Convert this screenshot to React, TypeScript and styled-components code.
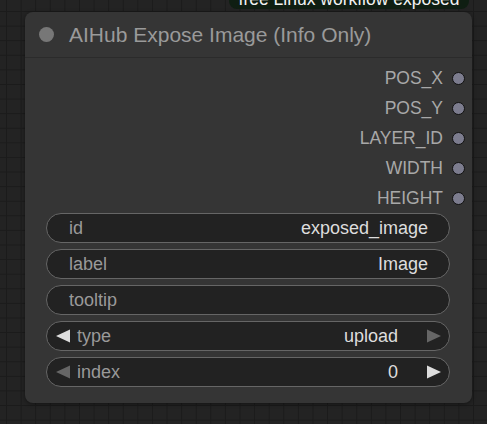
import React from "react";
import styled, { createGlobalStyle } from "styled-components";

const Global = createGlobalStyle`
  html, body { margin: 0; padding: 0; background: #222; }
  * { box-sizing: border-box; }
`;

const Canvas = styled.div`
  position: relative;
  width: 487px;
  height: 424px;
  overflow: hidden;
  padding: 12px 0 0 25px;
  background-color: #232323;
  background-image:
    linear-gradient(to right, #1b1b1b 1px, transparent 1px),
    linear-gradient(to bottom, #1b1b1b 1px, transparent 1px);
  background-size: 14.6px 14.6px;
  background-position: 6px 11px;
  font-family: "Liberation Sans", Arial, sans-serif;
`;

const Badge = styled.div`
  position: absolute;
  left: 229px;
  top: -12px;
  width: 240px;
  height: 21px;
  padding-top: 1px;
  background: #0f1e12;
  border-radius: 0 0 8px 8px;
  color: #f2f2f2;
  font-size: 17.5px;
  line-height: 21px;
  text-align: center;
  white-space: nowrap;
  overflow: hidden;
`;

const Node = styled.div`
  width: 447px;
  height: 391px;
  background: #353535;
  border-radius: 8px;
  box-shadow: 0 1px 4px rgba(0, 0, 0, 0.45);
  display: flex;
  flex-direction: column;
`;

const TitleBar = styled.div`
  height: 46px;
  display: flex;
  align-items: center;
  gap: 15px;
  padding-left: 14px;
  border-bottom: 1px solid #2b2b2b;
`;

const TitleDot = styled.span`
  width: 15px;
  height: 15px;
  border-radius: 50%;
  background: #777;
`;

const TitleText = styled.span`
  font-size: 21px;
  color: #9a9a9a;
`;

const Outputs = styled.div`
  display: flex;
  flex-direction: column;
  padding: 5px 7px 0 0;
`;

const OutputRow = styled.div`
  height: 30px;
  display: flex;
  justify-content: flex-end;
  align-items: center;
  gap: 9px;
`;

const OutputLabel = styled.span`
  font-size: 17.5px;
  color: #a8a8a8;
`;

const Slot = styled.span`
  width: 13px;
  height: 13px;
  border-radius: 50%;
  background: #7c7c8e;
  border: 1.5px solid #111;
`;

const Widgets = styled.div`
  display: flex;
  flex-direction: column;
  gap: 6px;
  padding: 0 22px 0 21px;
`;

const Widget = styled.div<{ $combo?: boolean }>`
  height: 30px;
  display: flex;
  align-items: center;
  background: #222;
  border: 1px solid #666;
  border-radius: 15px;
  padding: ${(p) => (p.$combo ? "0 8px 0 9px" : "0 21px 0 22px")};
  font-size: 18px;
`;

const WLabel = styled.span<{ $combo?: boolean }>`
  flex: 1;
  color: #999;
  margin-left: ${(p) => (p.$combo ? "7px" : "0")};
`;

const WValue = styled.span<{ $combo?: boolean }>`
  color: #ddd;
  margin-right: ${(p) => (p.$combo ? "29px" : "0")};
`;

const Arrow = ({ dir, on }: { dir: "left" | "right"; on: boolean }) => (
  <svg width="14" height="14" viewBox="0 0 14 14" style={{ display: "block" }}>
    <polygon
      points={dir === "left" ? "14,0.5 14,13.5 0,7" : "0,0.5 0,13.5 14,7"}
      fill={on ? "#ddd" : "#666"}
    />
  </svg>
);

const outputs = ["POS_X", "POS_Y", "LAYER_ID", "WIDTH", "HEIGHT"];

export default function App() {
  return (
    <>
      <Global />
      <Canvas>
        <Badge>free Linux workflow exposed</Badge>
        <Node>
          <TitleBar>
            <TitleDot />
            <TitleText>AIHub Expose Image (Info Only)</TitleText>
          </TitleBar>
          <Outputs>
            {outputs.map((o) => (
              <OutputRow key={o}>
                <OutputLabel>{o}</OutputLabel>
                <Slot />
              </OutputRow>
            ))}
          </Outputs>
          <Widgets>
            <Widget>
              <WLabel>id</WLabel>
              <WValue>exposed_image</WValue>
            </Widget>
            <Widget>
              <WLabel>label</WLabel>
              <WValue>Image</WValue>
            </Widget>
            <Widget>
              <WLabel>tooltip</WLabel>
              <WValue></WValue>
            </Widget>
            <Widget $combo>
              <Arrow dir="left" on />
              <WLabel $combo>type</WLabel>
              <WValue $combo>upload</WValue>
              <Arrow dir="right" on={false} />
            </Widget>
            <Widget $combo>
              <Arrow dir="left" on={false} />
              <WLabel $combo>index</WLabel>
              <WValue $combo>0</WValue>
              <Arrow dir="right" on />
            </Widget>
          </Widgets>
        </Node>
      </Canvas>
    </>
  );
}
